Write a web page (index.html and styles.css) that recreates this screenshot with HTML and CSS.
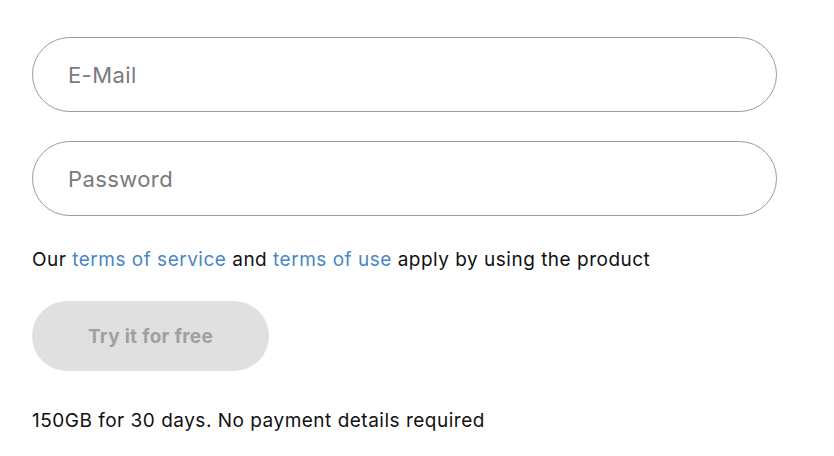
FILE: index.html
```html
<!DOCTYPE html>
<html>
<head>
<meta charset="utf-8">
<link rel="stylesheet" href="styles.css">
</head>
<body>
<form class="form">
  <input class="field" type="email" placeholder="E-Mail">
  <input class="field" type="password" placeholder="Password">
  <p class="terms">Our <a href="#">terms of service</a> and <a href="#">terms of use</a> apply by using the product</p>
  <button class="cta" type="button">Try it for free</button>
  <p class="note">150GB for 30 days. No payment details required</p>
</form>
</body>
</html>
```
FILE: styles.css
```css
html, body {
  margin: 0;
  padding: 0;
  background: #fff;
}
body {
  font-family: Inter, sans-serif;
  color: #111;
}
.form {
  display: flex;
  flex-direction: column;
  align-items: flex-start;
  padding: 37px 0 0 32px;
  width: 745px;
}
.field {
  box-sizing: border-box;
  width: 745px;
  height: 75px;
  border: 1px solid #9a9a9a;
  border-radius: 38px;
  padding: 0 0 0 35px;
  font-family: inherit;
  font-size: 22px;
  letter-spacing: 0.4px;
  color: #333;
  outline: none;
  margin: 0 0 29px 0;
}
.field::placeholder {
  color: #7a7a7a;
}
.terms {
  margin: 3px 0 0 0;
  font-size: 19px;
  line-height: 24px;
  letter-spacing: 0.5px;
}
.terms a {
  color: #4a86c4;
  text-decoration: none;
}
.cta {
  margin-top: 29px;
  width: 237px;
  height: 70px;
  border: none;
  border-radius: 35px;
  background: #e0e0e0;
  color: #a0a0a0;
  font-family: inherit;
  font-weight: 700;
  font-size: 19px;
  letter-spacing: 0.3px;
}
.note {
  margin: 38px 0 0 0;
  font-size: 19px;
  line-height: 24px;
  letter-spacing: 0.5px;
}
```
